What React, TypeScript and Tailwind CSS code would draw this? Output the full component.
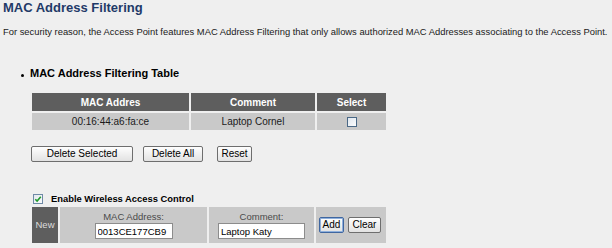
import React from 'react';

type Row = {
  mac: string;
  comment: string;
};

const rows: Row[] = [{ mac: '00:16:44:a6:fa:ce', comment: 'Laptop Cornel' }];

function Button({ label, width, focused }: { label: string; width: string; focused?: boolean }) {
  return (
    <button
      type="button"
      className={`${width} h-[16px] flex items-center justify-center rounded-[2px] border bg-linear-to-b from-[#fefefe] to-[#e2e2e2] text-[10px] leading-[12px] text-black ${
        focused ? 'border-[#3f66a0] shadow-[inset_0_0_0_1px_#8fb0dc]' : 'border-[#6e6e6e]'
      }`}
    >
      {label}
    </button>
  );
}

export default function App() {
  return (
    <div className="w-[612px] h-[248px] overflow-hidden bg-[#efefef] font-['Liberation_Sans',Arial,sans-serif] text-[#1a1a1a]">
      {/* page title + intro */}
      <div className="pl-[3px]">
        <h1 className="text-[13px] leading-[16px] font-bold text-[#1f3a68]">MAC Address Filtering</h1>
        <p className="mt-[10px] text-[9.4px] leading-[12px] whitespace-nowrap">
          For security reason, the Access Point features MAC Address Filtering that only allows authorized MAC
          Addresses associating to the Access Point.
        </p>
      </div>

      {/* section heading */}
      <div className="mt-[28px] pl-[21px] flex items-baseline gap-[6px]">
        <span className="w-[3px] h-[3px] rounded-full bg-black self-end mb-[3px]"></span>
        <h2 className="text-[11px] leading-[14px] font-bold text-black">MAC Address Filtering Table</h2>
      </div>

      {/* filtering table */}
      <div className="mt-[13px] ml-[32px] grid grid-cols-[157px_124px_69px] gap-[2px] text-[10px]">
        <div className="h-[18px] flex items-center justify-center bg-[#5e5e5e] font-bold text-white">MAC Addres</div>
        <div className="h-[18px] flex items-center justify-center bg-[#5e5e5e] font-bold text-white">Comment</div>
        <div className="h-[18px] flex items-center justify-center bg-[#5e5e5e] font-bold text-white">Select</div>
        {rows.map((row) => (
          <React.Fragment key={row.mac}>
            <div className="h-[17px] flex items-center justify-center bg-[#c9c9c9]">{row.mac}</div>
            <div className="h-[17px] flex items-center justify-center bg-[#c9c9c9]">{row.comment}</div>
            <div className="h-[17px] flex items-center justify-center bg-[#c9c9c9]">
              <span className="w-[10px] h-[10px] border border-[#4a6886] bg-linear-to-br from-[#dfe6ee] to-[#fbfcfd]"></span>
            </div>
          </React.Fragment>
        ))}
      </div>

      {/* table actions */}
      <div className="mt-[16px] ml-[31px] flex items-center">
        <Button label="Delete Selected" width="w-[102px]" />
        <div className="ml-[10px]">
          <Button label="Delete All" width="w-[60px]" />
        </div>
        <div className="ml-[14px]">
          <Button label="Reset" width="w-[35px]" />
        </div>
      </div>

      {/* enable toggle */}
      <div className="mt-[31px] ml-[33px] h-[12px] flex items-center gap-[8px]">
        <span className="w-[10px] h-[10px] flex items-center justify-center border border-[#6f8aa6] bg-linear-to-br from-[#e2e8ee] to-[#fafbfc]">
          <svg width="8" height="8" viewBox="0 0 8 8" fill="none">
            <path d="M1.3 4.2 L3.1 6 L6.8 1.8" stroke="#1f9a2a" strokeWidth="1.6" />
          </svg>
        </span>
        <span className="text-[9.4px] leading-[12px] font-bold text-black">Enable Wireless Access Control</span>
      </div>

      {/* new entry row */}
      <div className="mt-[2px] ml-[32px] grid grid-cols-[26px_147px_105px_70px] gap-[2px] h-[36px] text-[9.5px]">
        <div className="flex items-center justify-center bg-[#5e5e5e] text-[#dcdcdc]">New</div>
        <div className="flex flex-col items-center pt-[4px] bg-[#c9c9c9]">
          <span className="leading-[12px] text-[#4a4a4a]">MAC Address:</span>
          <input
            readOnly
            value="0013CE177CB9"
            className="w-[78px] h-[16px] pl-[2px] border border-[#8c8c8c] bg-white text-[9.5px] text-black outline-none"
          />
        </div>
        <div className="flex flex-col items-center pt-[4px] bg-[#c9c9c9]">
          <span className="leading-[12px] text-[#4a4a4a]">Comment:</span>
          <input
            readOnly
            value="Laptop Katy"
            className="w-[87px] h-[16px] pl-[2px] border border-[#8c8c8c] bg-white text-[9.5px] text-black outline-none"
          />
        </div>
        <div className="flex items-center pl-[3px] gap-[4px] bg-[#c9c9c9]">
          <Button label="Add" width="w-[25px]" focused />
          <Button label="Clear" width="w-[33px]" />
        </div>
      </div>
    </div>
  );
}
